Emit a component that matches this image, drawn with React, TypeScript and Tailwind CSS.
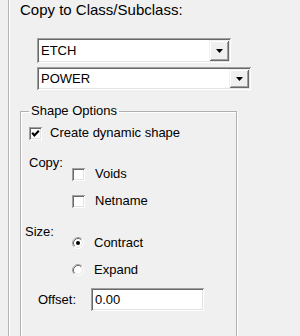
import React from 'react';

const sunken =
  'bg-white shadow-[inset_1px_1px_0_#a0a0a0,inset_-1px_-1px_0_#ffffff,inset_2px_2px_0_#696969,inset_-2px_-2px_0_#e3e3e3]';

const CheckBox: React.FC<{ checked?: boolean }> = ({ checked }) => (
  <div className={`flex h-[13px] w-[13px] shrink-0 items-center justify-center ${sunken}`}>
    {checked && (
      <svg width="9" height="9" viewBox="0 0 9 9">
        <polyline points="1.2,3.8 3.4,6.4 7.8,1.8" fill="none" stroke="#000" strokeWidth="2.1" />
      </svg>
    )}
  </div>
);

const Radio: React.FC<{ checked?: boolean }> = ({ checked }) => (
  <svg width="12" height="12" viewBox="0 0 12 12" className="shrink-0">
    <circle cx="6" cy="6" r="5.5" fill="#fff" />
    <path d="M2.11 9.89 A5.5 5.5 0 0 1 9.89 2.11" fill="none" stroke="#a0a0a0" strokeWidth="1" />
    <path d="M9.89 2.11 A5.5 5.5 0 0 1 2.11 9.89" fill="none" stroke="#ffffff" strokeWidth="1" />
    <path d="M2.82 9.18 A4.5 4.5 0 0 1 9.18 2.82" fill="none" stroke="#696969" strokeWidth="1" />
    <path d="M9.18 2.82 A4.5 4.5 0 0 1 2.82 9.18" fill="none" stroke="#e3e3e3" strokeWidth="1" />
    {checked && <circle cx="6" cy="6" r="2" fill="#000" />}
  </svg>
);

const Combo: React.FC<{ value: string; width: string; height: string }> = ({ value, width, height }) => (
  <div className={`flex items-stretch p-[2px] ${width} ${height} ${sunken}`}>
    <div className="flex flex-1 items-center pl-[2px] pt-[1px] text-[13px]">{value}</div>
    <div className="flex w-[20px] items-center justify-center bg-[#f0f0f0] shadow-[inset_1px_1px_0_#f0f0f0,inset_-1px_-1px_0_#696969,inset_2px_2px_0_#ffffff,inset_-2px_-2px_0_#a0a0a0]">
      <svg width="7" height="4" viewBox="0 0 7 4">
        <polygon points="0,0 7,0 3.5,4" fill="#000" />
      </svg>
    </div>
  </div>
);

const Option: React.FC<{ label: string; kind: 'check' | 'radio'; checked?: boolean }> = ({ label, kind, checked }) => (
  <div className="flex h-[16px] items-center gap-[10px] text-[13px] leading-[16px]">
    {kind === 'check' ? <CheckBox checked={checked} /> : <Radio checked={checked} />}
    <span>{label}</span>
  </div>
);

export default function App() {
  return (
    <div className="h-[336px] w-[300px] overflow-hidden bg-[#f0f0f0] font-['Liberation_Sans',Arial,sans-serif] text-black">
      <div className="ml-[8px] flex h-full flex-col border-l border-[#b4b4b4] pl-[11px] pt-[2px] shadow-[inset_1px_0_0_#ffffff]">
        <div className="text-[15px] leading-[16px]">Copy to Class/Subclass:</div>

        <div className="ml-[17px] mt-[20px] flex flex-col gap-[4px]">
          <Combo value="ETCH" width="w-[194px]" height="h-[25px]" />
          <Combo value="POWER" width="w-[214px]" height="h-[23px]" />
        </div>

        <fieldset className="mt-[13px] h-[260px] w-[217px] shrink-0 border border-[#b0b0b0] shadow-[inset_1px_1px_0_#ffffff,1px_1px_0_#ffffff]">
          <legend className="ml-[8px] px-[2px] text-[13px] leading-[16px]">Shape Options</legend>

          <div className="pl-[4px] text-[13px] leading-[16px]">
            <div className="mt-[6px] pl-[4px]">
              <div className="flex h-[16px] items-center gap-[8px]">
                <CheckBox checked />
                <span>Create dynamic shape</span>
              </div>
            </div>

            <div className="mt-[14px] flex">
              <div className="w-[47px] pl-[4px]">Copy:</div>
              <div className="flex flex-col gap-[11px] pt-[11px]">
                <Option kind="check" label="Voids" />
                <Option kind="check" label="Netname" />
              </div>
            </div>

            <div className="mt-[15px] flex">
              <div className="w-[47px]">Size:</div>
              <div className="flex flex-col gap-[11px] pt-[11px]">
                <Option kind="radio" label="Contract" checked />
                <Option kind="radio" label="Expand" />
              </div>
            </div>

            <div className="mt-[10px] flex items-center">
              <div className="w-[66px] pl-[13px]">Offset:</div>
              <div className={`flex h-[23px] w-[113px] items-center pl-[4px] ${sunken}`}>0.00</div>
            </div>
          </div>
        </fieldset>
      </div>
    </div>
  );
}
